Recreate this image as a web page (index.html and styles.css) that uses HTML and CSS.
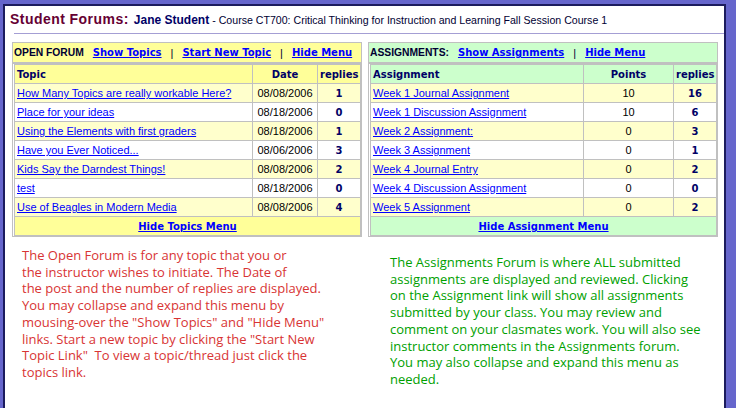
FILE: index.html
```html
<!DOCTYPE html>
<html lang="en">
<head>
    <meta charset="UTF-8">
    <title>Student Forums</title>
    <link rel="stylesheet" href="styles.css">
</head>
<body>
    <div class="page">
        <div class="page-title">
            <span class="title-main">Student Forums:</span>
            <span class="title-user">Jane Student</span>
            <span class="title-course">- Course CT700: Critical Thinking for Instruction and Learning Fall Session Course 1</span>
        </div>
        <hr class="title-rule">

        <div class="forums">
            <div class="forum-col">
                <div class="forum-box topics">
                    <div class="forum-head">
                        <span class="head-label">OPEN FORUM</span>
                        <a href="#">Show Topics</a>
                        <span class="sep">|</span>
                        <a href="#">Start New Topic</a>
                        <span class="sep">|</span>
                        <a href="#">Hide Menu</a>
                    </div>
                    <table class="forum-table">
                        <colgroup>
                            <col style="width: 238px">
                            <col style="width: 65px">
                            <col>
                        </colgroup>
                        <tr class="head-row">
                            <th class="left">Topic</th>
                            <th>Date</th>
                            <th>replies</th>
                        </tr>
                        <tr class="odd"><td><a href="#">How Many Topics are really workable Here?</a></td><td class="mid">08/08/2006</td><td class="count">1</td></tr>
                        <tr><td><a href="#">Place for your ideas</a></td><td class="mid">08/18/2006</td><td class="count">0</td></tr>
                        <tr class="odd"><td><a href="#">Using the Elements with first graders</a></td><td class="mid">08/18/2006</td><td class="count">1</td></tr>
                        <tr><td><a href="#">Have you Ever Noticed...</a></td><td class="mid">08/06/2006</td><td class="count">3</td></tr>
                        <tr class="odd"><td><a href="#">Kids Say the Darndest Things!</a></td><td class="mid">08/08/2006</td><td class="count">2</td></tr>
                        <tr><td><a href="#">test</a></td><td class="mid">08/18/2006</td><td class="count">0</td></tr>
                        <tr class="odd"><td><a href="#">Use of Beagles in Modern Media</a></td><td class="mid">08/08/2006</td><td class="count">4</td></tr>
                        <tr class="foot-row"><td colspan="3"><a href="#">Hide Topics Menu</a></td></tr>
                    </table>
                </div>
                <p class="note note-red">
                    The Open Forum is for any topic that you or<br>
                    the instructor wishes to initiate. The Date of<br>
                    the post and the number of replies are displayed.<br>
                    You may collapse and expand this menu by<br>
                    mousing-over the "Show Topics" and "Hide Menu"<br>
                    links. Start a new topic by clicking the "Start New<br>
                    Topic Link"&nbsp; To view a topic/thread just click the<br>
                    topics link.
                </p>
            </div>

            <div class="forum-col">
                <div class="forum-box assignments">
                    <div class="forum-head">
                        <span class="head-label">ASSIGNMENTS:</span>
                        <a href="#">Show Assignments</a>
                        <span class="sep">|</span>
                        <a href="#">Hide Menu</a>
                    </div>
                    <table class="forum-table">
                        <colgroup>
                            <col style="width: 213px">
                            <col style="width: 90px">
                            <col>
                        </colgroup>
                        <tr class="head-row">
                            <th class="left">Assignment</th>
                            <th>Points</th>
                            <th>replies</th>
                        </tr>
                        <tr class="odd"><td><a href="#">Week 1 Journal Assignment</a></td><td class="mid">10</td><td class="count">16</td></tr>
                        <tr><td><a href="#">Week 1 Discussion Assignment</a></td><td class="mid">10</td><td class="count">6</td></tr>
                        <tr class="odd"><td><a href="#">Week 2 Assignment:</a></td><td class="mid">0</td><td class="count">3</td></tr>
                        <tr><td><a href="#">Week 3 Assignment</a></td><td class="mid">0</td><td class="count">1</td></tr>
                        <tr class="odd"><td><a href="#">Week 4 Journal Entry</a></td><td class="mid">0</td><td class="count">2</td></tr>
                        <tr><td><a href="#">Week 4 Discussion Assignment</a></td><td class="mid">0</td><td class="count">0</td></tr>
                        <tr class="odd"><td><a href="#">Week 5 Assignment</a></td><td class="mid">0</td><td class="count">2</td></tr>
                        <tr class="foot-row"><td colspan="3"><a href="#">Hide Assignment Menu</a></td></tr>
                    </table>
                </div>
                <p class="note note-green">
                    The Assignments Forum is where ALL submitted<br>
                    assignments are displayed and reviewed. Clicking<br>
                    on the Assignment link will show all assignments<br>
                    submitted by your class. You may review and<br>
                    comment on your clasmates work. You will also see<br>
                    instructor comments in the Assignments forum.<br>
                    You may also collapse and expand this menu as<br>
                    needed.
                </p>
            </div>
        </div>
    </div>
</body>
</html>
```

FILE: styles.css
```css
* {
    margin: 0;
    padding: 0;
    box-sizing: border-box;
}

body {
    background: #6666cc;
    font-family: "Liberation Sans", Arial, sans-serif;
    font-size: 11px;
    color: #000;
    overflow: hidden;
}

.page {
    margin: 4px 0 0 3px;
    width: 723px;
    min-height: 420px;
    background: #fff;
    border: 2px solid #1c1c5e;
    border-bottom: none;
    padding: 5px 0 0 5px;
}

.page-title {
    height: 22px;
    white-space: nowrap;
}

.title-main {
    color: #660033;
    font-size: 14px;
    font-weight: bold;
    letter-spacing: 0.45px;
}

.title-user {
    color: #000066;
    font-weight: bold;
    font-size: 12px;
    margin-left: 2px;
}

.title-course {
    font-size: 10.6px;
    color: #000033;
}

.title-rule {
    border: none;
    border-top: 1px solid #a49ed4;
    margin: 0 0 8px 4px;
}

.forums {
    display: flex;
    gap: 6px;
    padding-left: 2px;
}

.forum-col {
    width: 350px;
}

.forum-box {
    border: 1px solid #c0c0c0;
}

.forum-head {
    display: flex;
    align-items: center;
    height: 21px;
    padding-left: 1px;
    border-bottom: 2px solid #c0c0c0;
    white-space: nowrap;
}

.topics .forum-head {
    background: #ffff99;
}

.assignments .forum-head {
    background: #ccffcc;
}

.head-label {
    font-weight: bold;
    font-size: 10.3px;
    color: #000033;
    margin-right: 9px;
}

.forum-head a {
    font-family: "DejaVu Sans", Verdana, sans-serif;
    font-weight: bold;
    font-size: 10px;
}

.sep {
    margin: 0 9px;
    color: #000033;
}

a {
    color: #0000ff;
}

.forum-table {
    border-collapse: collapse;
    margin-left: 1px;
    width: calc(100% - 1px);
    table-layout: fixed;
}

.forum-table th,
.forum-table td {
    border: 1px solid #c0c0c0;
    height: 19px;
    padding: 0 2px;
    white-space: nowrap;
    overflow: hidden;
}

.forum-table td {
    font-size: 11px;
}

.forum-table th {
    font-family: "DejaVu Sans", Verdana, sans-serif;
    font-size: 10px;
    color: #000066;
    text-align: center;
}

.forum-table th.left {
    text-align: left;
}

.topics .head-row,
.topics .foot-row {
    background: #ffff99;
}

.assignments .head-row,
.assignments .foot-row {
    background: #ccffcc;
}

.odd {
    background: #ffffcc;
}

.mid {
    text-align: center;
}

.count {
    text-align: center;
    font-family: "DejaVu Sans", Verdana, sans-serif;
    font-weight: bold;
    color: #000066;
}

.forum-table .count {
    font-size: 10px;
}

.foot-row td {
    text-align: center;
}

.foot-row a {
    font-family: "DejaVu Sans", Verdana, sans-serif;
    font-weight: bold;
    font-size: 10px;
}

.note {
    font-family: "Open Sans", sans-serif;
    font-size: 13px;
    line-height: 16.7px;
    white-space: nowrap;
}

.note-red {
    color: #d83434;
    margin: 10px 0 0 10px;
}

.note-green {
    color: #00a000;
    margin: 17px 0 0 22px;
}
```
